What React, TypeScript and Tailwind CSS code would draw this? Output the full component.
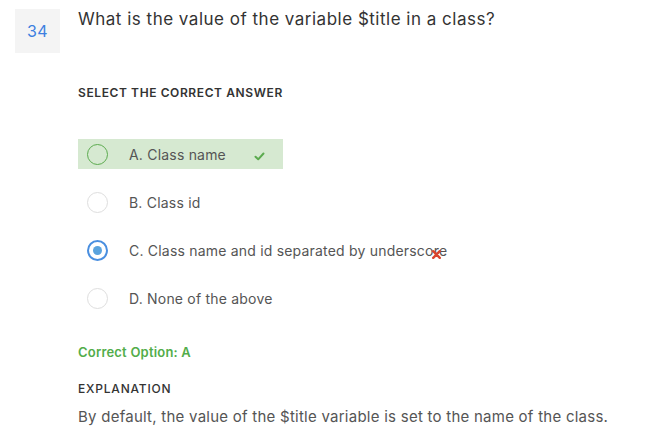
import React from "react";

const options = [
  { key: "A", label: "A. Class name", state: "correct" },
  { key: "B", label: "B. Class id", state: "none" },
  { key: "C", label: "C. Class name and id separated by underscore", state: "wrong" },
  { key: "D", label: "D. None of the above", state: "none" },
];

const Radio = ({ state }: { state: string }) => {
  if (state === "correct")
    return <span className="w-[21px] h-[21px] rounded-full border border-[#5cab4f] shrink-0" />;
  if (state === "wrong")
    return (
      <span className="w-[21px] h-[21px] rounded-full border-2 border-[#4a8fe0] shrink-0 flex items-center justify-center">
        <span className="w-[9px] h-[9px] rounded-full bg-[#5aa3de]" />
      </span>
    );
  return <span className="w-[21px] h-[21px] rounded-full border border-[#dedede] shrink-0" />;
};

export default function App() {
  return (
    <div
      className="w-[666px] h-[443px] bg-white overflow-hidden"
      style={{ fontFamily: "Inter, 'Open Sans', sans-serif" }}
    >
      <div className="flex pt-[9px] pl-[15px]">
        {/* number box */}
        <div className="w-[45px] h-[44px] bg-[#f4f4f4] flex items-center justify-center text-[#3d7fe0] text-[16px] tracking-[0.5px]">
          34
        </div>
        <div className="ml-[18px] flex flex-col">
          <h1 className="text-[17px] text-[#333] leading-[20px] tracking-[0.5px]">
            What is the value of the variable $title in a class?
          </h1>
          <div className="mt-[55px] text-[12px] font-semibold text-[#333] tracking-[0.6px]">
            SELECT THE CORRECT ANSWER
          </div>

          <div className="mt-[37px] flex flex-col">
            {options.map((o) => (
              <div key={o.key} className="h-[48px] flex items-start">
                <div
                  className={`h-[30px] flex items-center pl-[9px] ${
                    o.state === "correct" ? "bg-[#d6e9d1] w-[205px]" : ""
                  }`}
                >
                  <Radio state={o.state} />
                  <span className="ml-[21px] text-[14px] text-[#555] tracking-[0.2px] relative">
                    {o.label}
                    {o.state === "wrong" && (
                      <svg
                        className="absolute right-[5px] top-[9px]"
                        width="11"
                        height="11"
                        viewBox="0 0 10 10"
                      >
                        <path d="M2 2 L8 8 M8 2 L2 8" stroke="#d9442f" strokeWidth="2.2" strokeLinecap="round" />
                      </svg>
                    )}
                  </span>
                  {o.state === "correct" && (
                    <svg className="ml-[28px] mt-[4px]" width="11" height="9" viewBox="0 0 11 9">
                      <path d="M1.5 4.8 L4.2 7.3 L9.5 1.5" stroke="#5cab4f" strokeWidth="2" fill="none" strokeLinecap="round" strokeLinejoin="round" />
                    </svg>
                  )}
                </div>
              </div>
            ))}
          </div>

          <div className="mt-[12px] text-[13px] font-semibold text-[#52ad4a] tracking-[0.2px]">Correct Option: A</div>
          <div className="mt-[17px] text-[12px] font-medium text-[#333] tracking-[0.8px]">EXPLANATION</div>
          <p className="mt-[8px] text-[15px] text-[#555] tracking-[0.25px]">
            By default, the value of the $title variable is set to the name of the class.
          </p>
        </div>
      </div>
    </div>
  );
}
